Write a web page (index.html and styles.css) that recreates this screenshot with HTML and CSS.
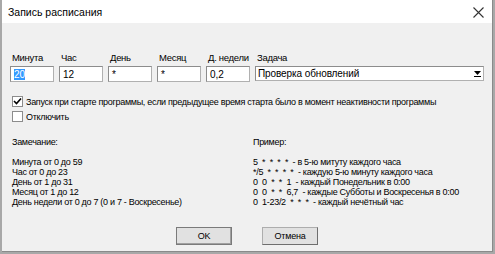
FILE: index.html
```html
<!DOCTYPE html>
<html lang="ru">
<head>
    <meta charset="UTF-8">
    <title>Запись расписания</title>
    <link rel="stylesheet" href="styles.css">
</head>
<body>
    <div class="window">
        <div class="titlebar">
            <span class="title">Запись расписания</span>
            <span class="close">
                <svg width="11" height="11" viewBox="0 0 11 11"><path d="M0.5 0.5 L10.5 10.5 M10.5 0.5 L0.5 10.5" stroke="#333" stroke-width="1.1"/></svg>
            </span>
        </div>
        <div class="content">
            <div class="fields">
                <div class="field">
                    <label>Минута</label>
                    <div class="edit"><span class="sel">20</span></div>
                </div>
                <div class="field">
                    <label>Час</label>
                    <div class="edit">12</div>
                </div>
                <div class="field">
                    <label>День</label>
                    <div class="edit">*</div>
                </div>
                <div class="field">
                    <label>Месяц</label>
                    <div class="edit">*</div>
                </div>
                <div class="field">
                    <label>Д. недели</label>
                    <div class="edit">0,2</div>
                </div>
                <div class="field">
                    <label>Задача</label>
                    <div class="edit combo">
                        <span>Проверка обновлений</span>
                        <span class="arrow">
                            <svg width="7" height="6" viewBox="0 0 7 6"><path d="M0 0 H7 L3.5 4 Z" fill="#000"/><path d="M0 5.5 H7" stroke="#000" stroke-width="1"/></svg>
                        </span>
                    </div>
                </div>
            </div>

            <div class="checks">
                <div class="check">
                    <span class="box">
                        <svg width="9" height="9" viewBox="0 0 9 9"><path d="M1 4 L3.5 6.5 L8 1.5" stroke="#000" stroke-width="1.6" fill="none"/></svg>
                    </span>
                    <span>Запуск при старте программы, если предыдущее время старта было в момент неактивности программы</span>
                </div>
                <div class="check">
                    <span class="box"></span>
                    <span>Отключить</span>
                </div>
            </div>

            <div class="notes">
                <div class="note-col">
                    <div class="note-head">Замечание:</div>
                    <div>Минута от 0 до 59</div>
                    <div>Час от 0 до 23</div>
                    <div>День от 1 до 31</div>
                    <div>Месяц от 1 до 12</div>
                    <div>День недели от 0 до 7 (0 и 7 - Воскресенье)</div>
                </div>
                <div class="note-col example">
                    <div class="note-head">Пример:</div>
                    <div>5&nbsp; *&nbsp; *&nbsp; *&nbsp; *&nbsp; - в 5-ю митуту каждого часа</div>
                    <div>*/5&nbsp; *&nbsp; *&nbsp; *&nbsp; *&nbsp; - каждую 5-ю минуту каждого часа</div>
                    <div>0&nbsp; 0&nbsp; *&nbsp; *&nbsp; 1&nbsp; - каждый Понедельник в 0:00</div>
                    <div>0&nbsp; 0&nbsp; *&nbsp; *&nbsp; 6,7&nbsp; - каждые Субботы и Воскресенья в 0:00</div>
                    <div>0&nbsp; 1-23/2&nbsp; *&nbsp; *&nbsp; *&nbsp; - каждый нечётный час</div>
                </div>
            </div>

            <div class="buttons">
                <button class="btn default">OK</button>
                <button class="btn">Отмена</button>
            </div>
        </div>
    </div>
</body>
</html>
```

FILE: styles.css
```css
body {
    margin: 0;
    background: #a8a8a8;
    font-family: "Liberation Sans", Arial, sans-serif;
    font-size: 9px;
    letter-spacing: -0.3px;
    color: #000;
    white-space: nowrap;
}
.window {
    width: 490px;
    height: 251px;
    margin-left: 2px;
    background: #f0f0f0;
    border-right: 1px solid #8a8a8a;
    border-bottom: 1px solid #8a8a8a;
    display: flex;
    flex-direction: column;
    overflow: hidden;
}
.titlebar {
    height: 23px;
    flex-shrink: 0;
    background: #ffffff;
    display: flex;
    align-items: center;
    justify-content: space-between;
    padding: 0 6px 0 6px;
}
.title {
    font-size: 10.5px;
    letter-spacing: 0;
}
.close {
    display: flex;
    margin-right: 2px;
    margin-top: 1px;
}
.content {
    flex: 1;
    display: flex;
    flex-direction: column;
    padding: 28px 0 0 8px;
}
.content > div {
    flex-shrink: 0;
}
.fields {
    display: flex;
    gap: 5px;
}
.field {
    display: flex;
    flex-direction: column;
    width: 44px;
}
.field:last-child {
    width: 229px;
}
.field label {
    height: 15px;
    line-height: 14px;
    padding-left: 2px;
    font-size: 9.5px;
}
.edit {
    height: 16px;
    box-sizing: border-box;
    background: #fff;
    border: 1px solid #b0b0b0;
    border-top-color: #8c8c8c;
    border-left-color: #8c8c8c;
    padding: 1px 3px;
    font-size: 10px;
    line-height: 13px;
    letter-spacing: -0.1px;
}
.sel {
    background: #3399ff;
    color: #fff;
}
.combo {
    display: flex;
    justify-content: space-between;
    align-items: center;
    padding: 0 1px 0 2px;
    height: 15px;
}
.arrow {
    width: 9px;
    display: flex;
    justify-content: center;
}
.checks {
    margin-top: 14px;
    padding-left: 2px;
    display: flex;
    flex-direction: column;
    gap: 4px;
}
.check {
    display: flex;
    align-items: center;
    gap: 3px;
    height: 11px;
}
.box {
    width: 9px;
    height: 9px;
    background: #fff;
    border: 1px solid #8c8c8c;
    display: flex;
    align-items: center;
    justify-content: center;
}
.notes {
    margin-top: 15px;
    display: flex;
    line-height: 10px;
}
.note-col {
    width: 244px;
    padding-left: 2px;
}
.note-head {
    margin-bottom: 10px;
}
.buttons {
    margin-top: auto;
    padding-bottom: 6px;
    display: flex;
    justify-content: center;
    gap: 30px;
    padding-right: 8px;
}
.btn {
    width: 56px;
    height: 18px;
    font-family: "Liberation Sans", Arial, sans-serif;
    font-size: 9px;
    letter-spacing: -0.2px;
    background: #e1e1e1;
    border: 1px solid #adadad;
    border-right-color: #6e6e6e;
    border-bottom-color: #6e6e6e;
    padding: 0;
}
.default {
    border: 1px solid #7a7a7a;
    box-shadow: inset -1px -1px 0 #a0a0a0;
}
```
